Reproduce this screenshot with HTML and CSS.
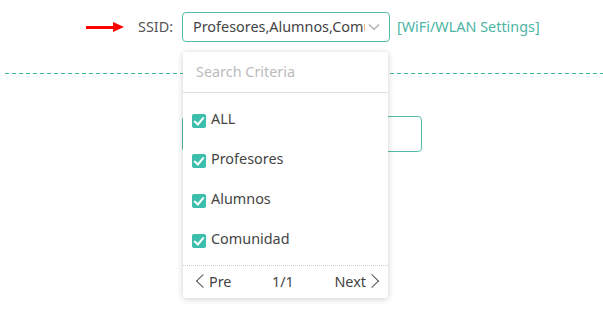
FILE: index.html
```html
<!DOCTYPE html>
<html lang="en">
<head>
    <meta charset="UTF-8">
    <title>SSID</title>
    <link rel="stylesheet" href="styles.css">
</head>
<body>
    <div class="page">
        <div class="form-row">
            <span class="arrow"></span>
            <label class="label">SSID:</label>
            <div class="select">
                <span class="select-text">Profesores,Alumnos,Comunidad</span>
                <svg class="chevron" width="12" height="8" viewBox="0 0 12 8"><path d="M1 1.5 L6 6.5 L11 1.5" fill="none" stroke="#aaa" stroke-width="1.2"/></svg>
            </div>
            <a class="link" href="#">[WiFi/WLAN Settings]</a>
        </div>
        <div class="divider"></div>
        <div class="form-row second">
            <div class="input-box"></div>
        </div>

        <div class="dropdown">
            <div class="search">Search Criteria</div>
            <ul class="options">
                <li><span class="check"></span>ALL</li>
                <li><span class="check"></span>Profesores</li>
                <li><span class="check"></span>Alumnos</li>
                <li><span class="check"></span>Comunidad</li>
            </ul>
            <div class="pager">
                <span><span class="lt"></span>Pre</span>
                <span>1/1</span>
                <span>Next<span class="gt"></span></span>
            </div>
        </div>
    </div>
</body>
</html>
```

FILE: styles.css
```css
body {
    margin: 0;
    background: #fff;
    font-family: "Noto Sans", "Open Sans", sans-serif;
    font-size: 14.4px;
    line-height: 20px;
    color: #444;
}
.page {
    position: relative;
    height: 318px;
    overflow: hidden;
}
.form-row {
    display: flex;
    align-items: center;
    padding-top: 12px;
}
.arrow {
    position: relative;
    width: 28px;
    height: 3px;
    background: #f00;
    margin-left: 86px;
    margin-right: 24px;
}
.arrow::after {
    content: "";
    position: absolute;
    right: -10px;
    top: -4px;
    border-left: 11px solid #f00;
    border-top: 5.5px solid transparent;
    border-bottom: 5.5px solid transparent;
}
.label {
    color: #555;
    width: 44px;
}
.select {
    box-sizing: border-box;
    width: 208px;
    height: 30px;
    border: 1px solid #55bba9;
    border-radius: 4px;
    display: flex;
    align-items: center;
    padding: 0 9px 0 10px;
    gap: 3px;
}
.select-text {
    flex: 1;
    white-space: nowrap;
    overflow: hidden;
    color: #444;
}
.chevron {
    flex: none;
}
.link {
    margin-left: 7px;
    color: #4db5a5;
    text-decoration: none;
}
.divider {
    margin: 31px 0 0 5px;
    height: 1px;
    background: repeating-linear-gradient(to right, #3cb8a2 0 4px, transparent 4px 7px);
}
.form-row.second {
    padding-top: 42px;
}
.input-box {
    box-sizing: border-box;
    width: 240px;
    height: 36px;
    margin-left: 182px;
    border: 1px solid #55bba9;
    border-radius: 4px;
}
.dropdown {
    position: absolute;
    left: 183px;
    top: 52px;
    width: 205px;
    background: #fff;
    box-shadow: 0 1px 6px rgba(0, 0, 0, 0.2);
    border-radius: 2px;
}
.search {
    height: 40px;
    line-height: 40px;
    padding-left: 13px;
    color: #bbb;
    border-bottom: 1px solid #ddd;
}
.options {
    list-style: none;
    margin: 0;
    padding: 6px 0 6px;
}
.options li {
    height: 40px;
    display: flex;
    align-items: center;
    padding-left: 9px;
    color: #444;
}
.check {
    position: relative;
    width: 14px;
    height: 14px;
    margin-right: 5px;
    margin-top: 3px;
    background: #3dbdab;
    border-radius: 2px;
}
.check::after {
    content: "";
    position: absolute;
    left: 4px;
    top: 1px;
    width: 4px;
    height: 8px;
    border-right: 2px solid #fff;
    border-bottom: 2px solid #fff;
    transform: rotate(40deg);
}
.pager {
    height: 32px;
    border-top: 1px dotted #ccc;
    display: flex;
    align-items: center;
    justify-content: space-between;
    padding: 0 11px 0 15px;
    color: #444;
}
.lt, .gt {
    display: inline-block;
    width: 9px;
    height: 9px;
    border-left: 1px solid #555;
    border-bottom: 1px solid #555;
    vertical-align: 1px;
}
.lt {
    transform: rotate(45deg);
    margin-right: 1px;
}
.gt {
    transform: rotate(-135deg);
    margin-left: 1px;
}
```
